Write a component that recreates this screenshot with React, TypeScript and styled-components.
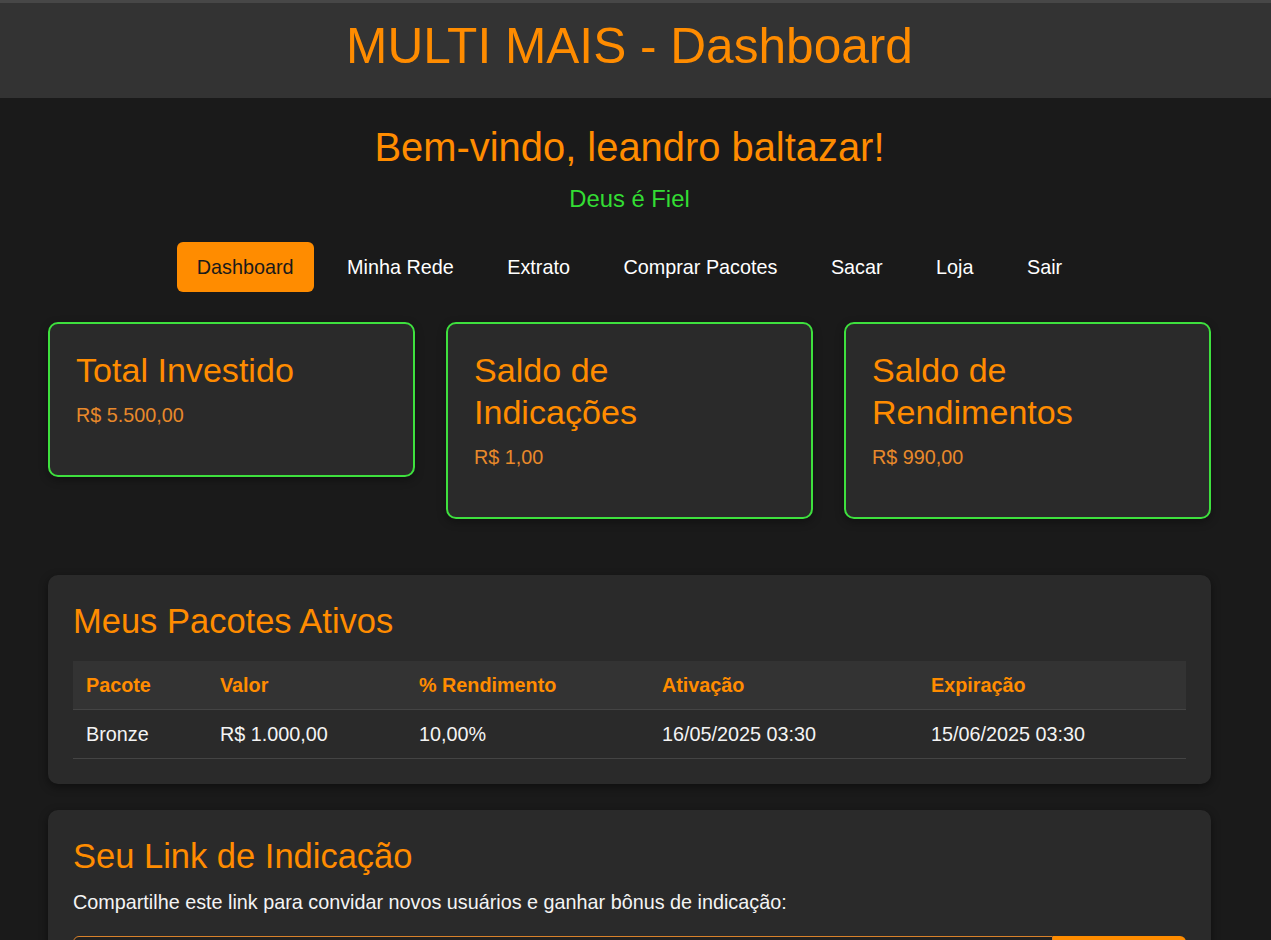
import React from 'react';
import styled, { createGlobalStyle } from 'styled-components';

const GlobalStyle = createGlobalStyle`
  html, body {
    margin: 0;
    padding: 0;
    background-color: #1a1a1a;
    font-family: "Liberation Sans", Arial, sans-serif;
    color: #f0f0f0;
  }
  * {
    box-sizing: border-box;
  }
`;

const Header = styled.header`
  background-color: #333333;
  border-top: 3px solid #474747;
  height: 98px;
  display: flex;
  align-items: center;
  justify-content: center;
  padding-right: 12px;
`;

const HeaderTitle = styled.h1`
  margin: 0;
  font-size: 49.6px;
  font-weight: normal;
  color: #ff8c00;
  line-height: 1;
  padding-bottom: 8px;
`;

const Main = styled.main`
  padding: 26px 60px 40px 48px;
`;

const Welcome = styled.section`
  display: flex;
  flex-direction: column;
  align-items: center;
`;

const WelcomeTitle = styled.h2`
  margin: 0;
  font-size: 39.9px;
  font-weight: normal;
  color: #ff8c00;
  line-height: 46px;
`;

const Motto = styled.p`
  margin: 15px 0 0;
  font-size: 23.8px;
  color: #33dd33;
  line-height: 27px;
`;

const Nav = styled.nav`
  display: flex;
  justify-content: center;
  gap: 13.5px;
  margin-top: 30px;
`;

const NavItem = styled.a<{ $active?: boolean }>`
  display: block;
  padding: 13.5px 20px;
  font-size: 19.8px;
  line-height: 23px;
  border-radius: 6px;
  text-decoration: none;
  cursor: pointer;
  color: ${(p) => (p.$active ? '#1a1a1a' : '#ffffff')};
  background-color: ${(p) => (p.$active ? '#ff8c00' : 'transparent')};
`;

const Cards = styled.div`
  display: grid;
  grid-template-columns: repeat(3, 1fr);
  gap: 31px;
  align-items: start;
  margin-top: 30px;
`;

const Card = styled.div`
  background-color: #2a2a2a;
  border: 2px solid #3ee03e;
  border-radius: 10px;
  padding: 24.6px 40px 24.6px 26px;
  box-shadow: 0 3px 8px rgba(0, 0, 0, 0.35);
`;

const CardTitle = styled.h3`
  margin: 0 0 13px;
  font-size: 34.1px;
  line-height: 42px;
  font-weight: normal;
  color: #ff8c00;
`;

const CardValue = styled.p`
  margin: 0 0 24px;
  font-size: 19.8px;
  line-height: 23px;
  color: #e8892a;
`;

const Panel = styled.section<{ $gap?: number }>`
  background-color: #2a2a2a;
  border-radius: 10px;
  padding: 25px;
  margin-top: ${(p) => p.$gap ?? 26}px;
  box-shadow: 0 3px 10px rgba(0, 0, 0, 0.45);
`;

const PanelTitle = styled.h2<{ $space?: number }>`
  margin: 2px 0 ${(p) => p.$space ?? 20}px;
  font-size: 34.5px;
  line-height: 39px;
  font-weight: normal;
  color: #ff8c00;
`;

const Table = styled.table`
  width: 100%;
  border-collapse: collapse;
  table-layout: fixed;
  font-size: 19.8px;
`;

const Th = styled.th`
  text-align: left;
  padding: 12.5px 13px;
  line-height: 23px;
  background-color: #333333;
  color: #ff8c00;
  font-weight: bold;
  border-bottom: 1px solid #444444;
`;

const Td = styled.td`
  padding: 12.5px 13px;
  line-height: 23px;
  color: #f4f4f4;
  border-bottom: 1px solid #444444;
`;

const Description = styled.p`
  margin: 0;
  font-size: 19.8px;
  line-height: 23px;
  color: #f4f4f4;
`;

const LinkRow = styled.div`
  display: flex;
  margin-top: 22px;
`;

const LinkInput = styled.input`
  flex: 1;
  height: 46px;
  padding: 0 13px;
  font-size: 19.8px;
  font-family: "Liberation Sans", Arial, sans-serif;
  color: #f0f0f0;
  background-color: #222222;
  border: 1px solid #d9822b;
  border-radius: 6px 0 0 6px;
`;

const CopyButton = styled.button`
  width: 133px;
  height: 46px;
  border: none;
  border-radius: 0 6px 6px 0;
  background-color: #ff8c00;
  color: #1a1a1a;
  font-size: 19.8px;
  font-family: "Liberation Sans", Arial, sans-serif;
  cursor: pointer;
`;

const navItems = ['Dashboard', 'Minha Rede', 'Extrato', 'Comprar Pacotes', 'Sacar', 'Loja', 'Sair'];

const summary = [
  { title: 'Total Investido', value: 'R$ 5.500,00' },
  { title: 'Saldo de Indicações', value: 'R$ 1,00' },
  { title: 'Saldo de Rendimentos', value: 'R$ 990,00' },
];

const columns = [
  { label: 'Pacote', width: 134 },
  { label: 'Valor', width: 199 },
  { label: '% Rendimento', width: 243 },
  { label: 'Ativação', width: 269 },
  { label: 'Expiração' },
];

const packages = [
  ['Bronze', 'R$ 1.000,00', '10,00%', '16/05/2025 03:30', '15/06/2025 03:30'],
];

export default function App() {
  return (
    <>
      <GlobalStyle />
      <Header>
        <HeaderTitle>MULTI MAIS - Dashboard</HeaderTitle>
      </Header>
      <Main>
        <Welcome>
          <WelcomeTitle>Bem-vindo, leandro baltazar!</WelcomeTitle>
          <Motto>Deus é Fiel</Motto>
        </Welcome>

        <Nav>
          {navItems.map((item) => (
            <NavItem key={item} $active={item === 'Dashboard'}>
              {item}
            </NavItem>
          ))}
        </Nav>

        <Cards>
          {summary.map((c) => (
            <Card key={c.title}>
              <CardTitle>{c.title}</CardTitle>
              <CardValue>{c.value}</CardValue>
            </Card>
          ))}
        </Cards>

        <Panel $gap={56}>
          <PanelTitle>Meus Pacotes Ativos</PanelTitle>
          <Table>
            <colgroup>
              {columns.map((col) => (
                <col key={col.label} style={col.width ? { width: col.width } : undefined} />
              ))}
            </colgroup>
            <thead>
              <tr>
                {columns.map((col) => (
                  <Th key={col.label}>{col.label}</Th>
                ))}
              </tr>
            </thead>
            <tbody>
              {packages.map((row) => (
                <tr key={row[0]}>
                  {row.map((cell, i) => (
                    <Td key={i}>{cell}</Td>
                  ))}
                </tr>
              ))}
            </tbody>
          </Table>
        </Panel>

        <Panel>
          <PanelTitle $space={15}>Seu Link de Indicação</PanelTitle>
          <Description>
            Compartilhe este link para convidar novos usuários e ganhar bônus de indicação:
          </Description>
          <LinkRow>
            <LinkInput readOnly value="https://multimais.com/cadastro?ref=leandro" />
            <CopyButton>Copiar Link</CopyButton>
          </LinkRow>
        </Panel>
      </Main>
    </>
  );
}
